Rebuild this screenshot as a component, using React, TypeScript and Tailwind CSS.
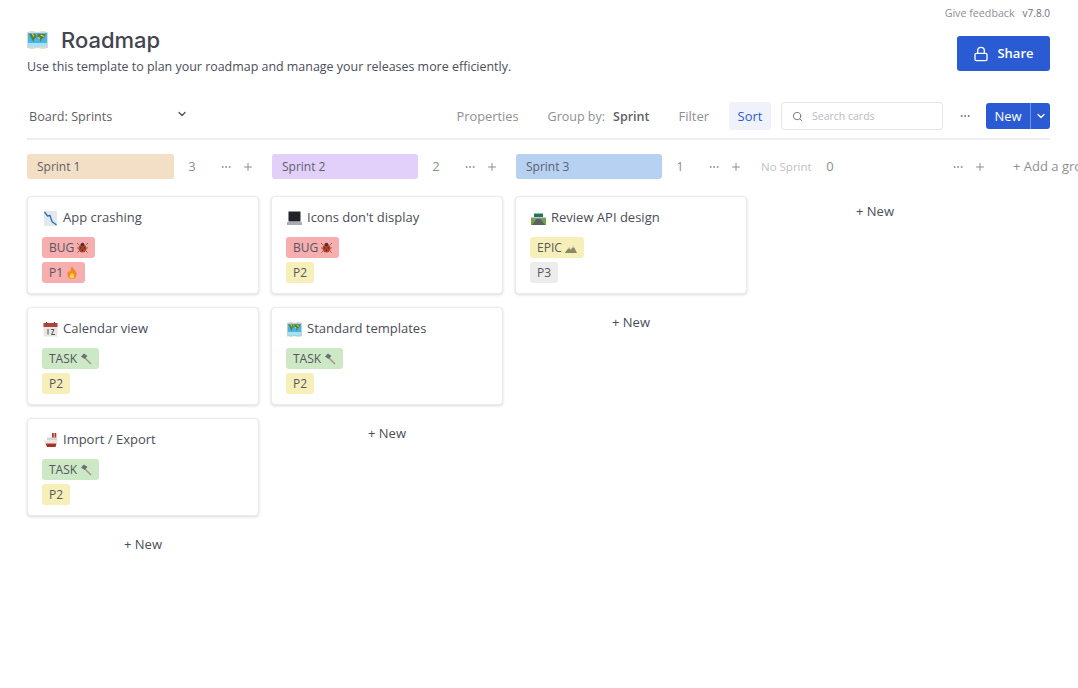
import { ReactNode } from 'react'
import { ChevronDown, Lock, MoreHorizontal, Plus, Search } from 'lucide-react'

const MapIcon = ({ width = 15, height = 15 }: { width?: number; height?: number }) => (
  <svg width={width} height={height} viewBox="0 0 20 18" preserveAspectRatio="none" className="shrink-0">
    <path d="M0 1l5-1 5 1 5-1 5 1v16l-5 1-5-1-5 1-5-1z" fill="#e2d8c8" />
    <path d="M1 2h18v14H1z" fill="#45b6ea" />
    <path d="M1 12h18v4H1z" fill="#a9e0f5" />
    <path d="M2 3h6l1 3-2 2-1 3-2-4zM10 3h8l-2 4-2 1-1 3-1-3-2-2z" fill="#5f7f34" />
    <path d="M5 2.500l1.500 3M13 4l3 1.500M11 6l1 2" stroke="#eccb3c" strokeWidth="1.200" />
  </svg>
)

const ChartDown = () => (
  <svg width={15} height={15} viewBox="0 0 15 15" className="shrink-0">
    <path d="M1 0h13v15H1z" fill="#e1e8ee" />
    <path d="M1.500 1l3 4 2.500-.5 2 6 4.500 3.500" fill="none" stroke="#2a6fb5" strokeWidth="1.300" />
  </svg>
)

const Laptop = () => (
  <svg width={15} height={15} viewBox="0 0 15 15" className="shrink-0">
    <path d="M1.500 0.500h12v10h-12z" fill="#202328" />
    <path d="M0 11h15v3H0z" fill="#a9adb2" />
  </svg>
)

const Motorway = () => (
  <svg width={15} height={15} viewBox="0 0 15 15" className="shrink-0">
    <path d="M0 8h15v6H0z" fill="#6fa53a" />
    <path d="M5.500 8h4l4.500 6H1z" fill="#5b6066" />
    <path d="M3 2.500h9v3.500H3z" fill="#1f7a54" />
    <path d="M0 6.500h15V8H0z" fill="#8b8f94" />
  </svg>
)

const CalendarIcon = () => (
  <svg width={15} height={15} viewBox="0 0 15 15" className="shrink-0">
    <path d="M0.500 1h14v13.500H.5z" fill="#e8e6e3" />
    <path d="M0.500 1h14v4H.5z" fill="#b8403a" />
    <path d="M3 0h1.200v3H3zM10.800 0H12v3h-1.200z" fill="#55585c" />
    <path d="M5 7v5.500M8 7.500h3L8.500 12.500H12" fill="none" stroke="#55585c" strokeWidth="1" />
  </svg>
)

const Ship = () => (
  <svg width={15} height={15} viewBox="0 0 15 15" className="shrink-0">
    <path d="M9 0h1.800v5H9zM11.500 0h1.800v5h-1.800z" fill="#b3352f" />
    <path d="M4 4.500h10v3H4z" fill="#d8d3cc" />
    <path d="M0 7.500h15l-1.500 3h-11z" fill="#ece8e2" />
    <path d="M2.500 10.500h11l-1 3.500H4z" fill="#a8302b" />
  </svg>
)

const Bug = () => (
  <svg width={11} height={11} viewBox="0 0 12 12" className="shrink-0">
    <path d="M2 3L0 1M10 3l2-2M1 6.500H0M11 6.500h1M2 10l-1.500 1.500M10 10l1.500 1.500" stroke="#5b3a33" strokeWidth=".8" />
    <circle cx="6" cy="7" r="4.500" fill="#b5452a" />
    <circle cx="6" cy="2.800" r="2" fill="#4a3430" />
    <circle cx="4" cy="6.500" r=".9" fill="#3b2622" />
    <circle cx="8" cy="6.500" r=".9" fill="#3b2622" />
    <circle cx="6" cy="9" r=".9" fill="#3b2622" />
  </svg>
)

const Fire = () => (
  <svg width={12} height={13} viewBox="0 0 12 14" className="shrink-0">
    <path d="M6 0c1 3 5 5 5 9a5 5 0 0 1-10 0c0-2 1-3 2-4 0 1 .5 2 1 2 .5-2 0-4 2-7z" fill="#f08a24" />
    <path d="M6 7c.5 1.500 2.500 2.500 2.500 4a2.500 2.500 0 0 1-5 0c0-1.500 2-2 2.500-4z" fill="#fbd34d" />
  </svg>
)

const Hammer = () => (
  <svg width={12} height={12} viewBox="0 0 12 12" className="shrink-0">
    <path d="M4.500 4.500l6.500 6.500" stroke="#9a8f83" strokeWidth="1.300" />
    <path d="M1 3.500L4 .5l3.500 2.500-3 3z" fill="#6c7075" />
  </svg>
)

const Mountain = () => (
  <svg width={12} height={12} viewBox="0 0 12 12" className="shrink-0">
    <path d="M0 11l4-6 2 3 2-5 4 8z" fill="#8c8a6a" />
    <path d="M8 3l1.200 2.500H6.900zM4 5l.9 1.500H3z" fill="#f2f2f2" />
    <path d="M0 11l2.500-3 2 3z" fill="#6f9a4a" />
  </svg>
)

const TAGS: Record<string, { color: string; icon?: ReactNode }> = {
  BUG: { color: 'bg-[#f6aeae]', icon: <Bug /> },
  P1: { color: 'bg-[#f6aeae]', icon: <Fire /> },
  TASK: { color: 'bg-[#cde8c5]', icon: <Hammer /> },
  EPIC: { color: 'bg-[#f7efb9]', icon: <Mountain /> },
  P2: { color: 'bg-[#f7efb9]' },
  P3: { color: 'bg-[#ececec]' },
}

function Tag({ name }: { name: string }) {
  const tag = TAGS[name]
  return (
    <div className={`flex h-[21px] w-fit items-center gap-[3px] rounded-[3px] px-[7px] text-[12px] text-[#55565f] ${tag.color}`}>
      {name}
      {tag.icon}
    </div>
  )
}

function Card({ icon, title, tags }: { icon: ReactNode; title: string; tags: string[] }) {
  return (
    <div className="h-[98px] rounded-[4px] border border-[#ebebeb] bg-white pl-[14px] pt-[12px] shadow-[0_1px_3px_rgba(0,0,0,0.15)]">
      <div className="flex h-[18px] items-center gap-[5px] pl-[1px] text-[13px] font-medium text-[#4b4d59]">
        {icon}
        {title}
      </div>
      <div className="mt-[10px] flex flex-col gap-1">
        {tags.map((t) => (
          <Tag key={t} name={t} />
        ))}
      </div>
    </div>
  )
}

function NewRow() {
  return <div className="mt-[19px] text-center text-[13px] font-medium leading-[18px] text-[#4b4d59]">+ New</div>
}

function GroupHeader({ label, color, count, muted }: { label: string; color?: string; count: number; muted?: boolean }) {
  return (
    <div className="flex h-[25px] w-[232px] shrink-0 items-center text-[#8e8f96]">
      {muted ? (
        <div className="ml-[2px] w-[51px] pt-[1px] text-[11.500px] text-[#c0c1c6]">{label}</div>
      ) : (
        <div className={`flex h-[25px] items-center rounded-[3px] px-[10px] pt-[1px] text-[12px] text-[#5f6068] ${color}`}>{label}</div>
      )}
      <div className="w-[36px] pt-[1px] text-center text-[13px]">{count}</div>
      <div className="ml-auto flex items-center gap-[10px] pr-[5px]">
        <MoreHorizontal size={12} />
        <Plus size={12} />
      </div>
    </div>
  )
}

export default function App() {
  return (
    <div className="h-[688px] w-full overflow-hidden bg-white font-['Open_Sans',sans-serif] text-[#4b4d59]">
      <div className="flex h-[26px] items-center justify-end gap-[8px] pr-[28px] text-[10.700px] text-[#8e8f96]">
        <span>Give feedback</span>
        <span className="text-[10px] text-[#6e6f77]">v7.8.0</span>
      </div>

      <div className="flex justify-between pl-[27px] pr-[28px]">
        <div>
          <div className="flex h-[28px] items-center">
            <MapIcon width={21} height={18} />
            <h1 className="ml-[13px] font-['Inter',sans-serif] text-[22px] font-medium text-[#43444f]">Roadmap</h1>
          </div>
          <p className="mt-[4px] text-[12.450px] leading-[18px] text-[#4b4d59]">
            Use this template to plan your roadmap and manage your releases more efficiently.
          </p>
        </div>
        <button className="mt-[10px] flex h-[35px] w-[93px] items-center justify-center gap-2 rounded-[3px] bg-[#2b5bd3] text-[13px] font-semibold text-white">
          <Lock size={16} />
          Share
        </button>
      </div>

      <div className="ml-[27px] mr-[28px] mt-[26px] flex h-[38px] items-center border-b-2 border-[#eeeeee] pb-[8px] text-[13px] text-[#8e8f96]">
        <div className="flex w-[161px] items-center justify-between pl-[2px] pt-[2px] text-[12.600px] text-[#5f6068]">
          Board: Sprints
          <ChevronDown size={12} strokeWidth={2.500} className="mb-[6px] text-[#4b4d59]" />
        </div>
        <div className="ml-auto flex items-center">
          <span className="pt-[2px] text-[12.800px]">Properties</span>
          <span className="ml-[29px] pt-[2px] text-[12.500px]">Group by:</span>
          <span className="ml-[8px] pt-[2px] text-[12.500px] font-semibold text-[#5f6068]">Sprint</span>
          <span className="ml-[29px] pt-[2px]">Filter</span>
          <span className="ml-[20px] flex h-[28px] w-[42px] items-center justify-center rounded-[3px] bg-[#eff2fb] pt-[2px] font-medium text-[#2b5bd3]">Sort</span>
          <div className="ml-[10px] flex h-[28px] w-[162px] items-center gap-[9px] rounded-[3px] border border-[#e4e4e7] pl-[10px] pt-[1px] text-[10.500px] text-[#bbbcc2]">
            <Search size={11} className="text-[#6e6f77]" />
            Search cards
          </div>
          <MoreHorizontal size={12} className="ml-[16px] text-[#6e6f77]" />
          <div className="ml-[15px] flex h-[26px] w-[64px] overflow-hidden rounded-[3px] bg-[#2b5bd3] text-white">
            <span className="flex w-[45px] items-center justify-center border-r border-[#6e8fe2] pt-[1px]">New</span>
            <span className="flex flex-1 items-center justify-center">
              <ChevronDown size={12} strokeWidth={2.500} />
            </span>
          </div>
        </div>
      </div>

      <div className="ml-[27px] mt-[14px] flex w-[1200px] gap-3">
        <GroupHeader label="Sprint 1" color="w-[147px] bg-[#f3dfc6]" count={3} />
        <GroupHeader label="Sprint 2" color="ml-[1px] w-[146px] bg-[#e2d0fb]" count={2} />
        <GroupHeader label="Sprint 3" color="ml-[1px] w-[146px] bg-[#b7d1f3]" count={1} />
        <GroupHeader label="No Sprint" count={0} muted />
        <div className="ml-[10px] flex h-[25px] shrink-0 items-center pt-[1px] text-[13px] text-[#8e8f96]">+ Add a group</div>
      </div>

      <div className="ml-[27px] mt-[17px] flex w-[1200px] items-start gap-3">
        <div className="flex w-[232px] shrink-0 flex-col">
          <div className="flex flex-col gap-[13px]">
            <Card icon={<ChartDown />} title="App crashing" tags={['BUG', 'P1']} />
            <Card icon={<CalendarIcon />} title="Calendar view" tags={['TASK', 'P2']} />
            <Card icon={<Ship />} title="Import / Export" tags={['TASK', 'P2']} />
          </div>
          <NewRow />
        </div>
        <div className="flex w-[232px] shrink-0 flex-col">
          <div className="flex flex-col gap-[13px]">
            <Card icon={<Laptop />} title="Icons don't display" tags={['BUG', 'P2']} />
            <Card icon={<MapIcon />} title="Standard templates" tags={['TASK', 'P2']} />
          </div>
          <NewRow />
        </div>
        <div className="flex w-[232px] shrink-0 flex-col">
          <Card icon={<Motorway />} title="Review API design" tags={['EPIC', 'P3']} />
          <NewRow />
        </div>
        <div className="flex w-[232px] shrink-0 flex-col">
          <div className="pt-[6px] text-center text-[13px] font-medium leading-[18px] text-[#4b4d59]">+ New</div>
        </div>
      </div>
    </div>
  )
}
